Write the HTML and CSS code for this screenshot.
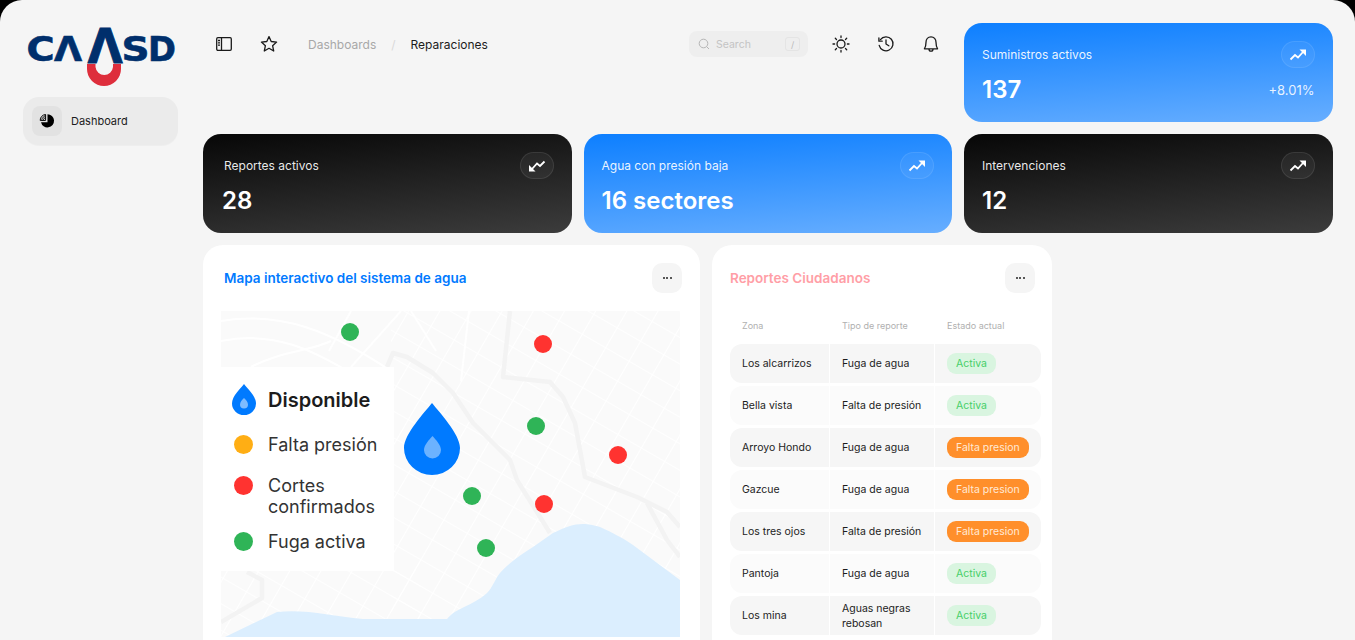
FILE: index.html
```html
<!DOCTYPE html>
<html lang="es">
<head>
    <meta charset="UTF-8">
    <meta name="viewport" content="width=device-width, initial-scale=1.0">
    <title>CAASD - Reparaciones</title>
    <link rel="stylesheet" href="styles.css">
</head>
<body>
    <div class="shell">
        <aside class="sidebar">
            <svg class="logo" viewBox="23 8 155 89" role="img" aria-label="CAASD">
                <g class="logo-letters">
                    <text transform="translate(26.5 61) scale(1.16 1)">C</text>
                    <text transform="translate(54 61) scale(1.1 1)">Λ</text>
                    <text transform="translate(87.5 62.5) scale(1.38 1.45)">Λ</text>
                    <text transform="translate(121.5 61) scale(1.18 1)">S</text>
                    <text transform="translate(148 61) scale(1.02 1)">D</text>
                </g>
                <path class="logo-drop" fill-rule="evenodd" d="M87 64H121V69A17 17 0 0 1 87 69ZM95.5 64V67A8.8 9 0 0 0 113 67V64Z"/>
            </svg>
            <a class="nav-item">
                <span class="nav-icon">
                    <svg width="16" height="16" viewBox="0 0 16 16">
                        <path d="M8.5 1.2A6.6 6.6 0 1 1 2 9.2H8.5Z" fill="#000"/>
                        <path d="M6.6 1.5V7.4H1.2A5.8 5.8 0 0 1 6.6 1.5ZM2.2 6.4 6 2.6M3.6 7.2 6.4 4.2" fill="none" stroke="#000" stroke-width="1"/>
                    </svg>
                </span>
                Dashboard
            </a>
        </aside>

        <main class="main">
            <header class="topbar">
                <div class="topbar-left">
                    <svg class="icon" width="18" height="18" viewBox="0 0 18 18" fill="none" stroke="#1a1a1a" stroke-width="1.3">
                        <rect x="1.7" y="2.7" width="14.6" height="12.6" rx="1.2"/>
                        <path d="M6.5 2.7V15.3M3 5.5H5M3 7.8H5M3 10.1H5"/>
                    </svg>
                    <svg class="icon star" width="18" height="18" viewBox="0 0 18 18" fill="none" stroke="#1a1a1a" stroke-width="1.3" stroke-linejoin="round">
                        <path d="M9 1.6 11.2 6.5 16.6 7.1 12.6 10.7 13.7 16 9 13.3 4.3 16 5.4 10.7 1.4 7.1 6.8 6.5Z"/>
                    </svg>
                    <nav class="crumbs">
                        <span class="crumb-muted">Dashboards</span>
                        <span class="crumb-sep">/</span>
                        <span class="crumb-now">Reparaciones</span>
                    </nav>
                </div>
                <div class="topbar-right">
                    <div class="search">
                        <svg width="12" height="12" viewBox="0 0 12 12" fill="none" stroke="#b5b5b5" stroke-width="1">
                            <circle cx="5.5" cy="5.5" r="4.3"/>
                            <path d="M8.7 8.7 11 11"/>
                        </svg>
                        <span class="search-text">Search</span>
                        <span class="search-key">/</span>
                    </div>
                    <svg class="icon" width="18" height="18" viewBox="0 0 18 18" fill="none" stroke="#1a1a1a" stroke-width="1.3" stroke-linecap="round">
                        <circle cx="9" cy="9" r="4"/>
                        <path d="M9 1V2.6M9 15.4V17M1 9H2.6M15.4 9H17M3.3 3.3 4.5 4.5M13.5 13.5 14.7 14.7M3.3 14.7 4.5 13.5M13.5 4.5 14.7 3.3"/>
                    </svg>
                    <svg class="icon" width="18" height="18" viewBox="0 0 18 18" fill="none" stroke="#1a1a1a" stroke-width="1.3" stroke-linecap="round" stroke-linejoin="round">
                        <path d="M3.4 4.6A7 7 0 1 1 2.2 10.4"/>
                        <path d="M1.9 2.9V6.2H5.2M9 5V9L11.8 10.8"/>
                    </svg>
                    <svg class="icon" width="18" height="18" viewBox="0 0 18 18" fill="none" stroke="#1a1a1a" stroke-width="1.3" stroke-linejoin="round">
                        <path d="M9 1.8C6 1.8 4 4.2 4 7.2C4 10.8 3.4 12.4 2.4 13.8H15.6C14.6 12.4 14 10.8 14 7.2C14 4.2 12 1.8 9 1.8Z"/>
                        <path d="M7 14C7 15.3 7.8 16.2 9 16.2S11 15.3 11 14"/>
                    </svg>
                </div>
            </header>

            <section class="kpi kpi-blue">
                <div class="kpi-row">
                    <span class="kpi-label">Suministros activos</span>
                    <span class="kpi-badge"><svg class="trend" viewBox="0 0 18 14"><path class="trend-line" d="M1.5 11.5 6 7 9 9.5 14 4"/><path class="trend-head" d="M10.5 1.5H17V8Z"/></svg></span>
                </div>
                <div class="kpi-row kpi-bottom">
                    <span class="kpi-value">137</span>
                    <span class="kpi-delta">+8.01%</span>
                </div>
            </section>

            <section class="kpi kpi-dark kpi-first">
                <div class="kpi-row">
                    <span class="kpi-label">Reportes activos</span>
                    <span class="kpi-badge"><svg class="trend trend-down" viewBox="0 0 18 14"><path class="trend-line" d="M1.5 11.5 6 7 9 9.5 14 4"/><path class="trend-head" d="M10.5 1.5H17V8Z"/></svg></span>
                </div>
                <div class="kpi-row kpi-bottom">
                    <span class="kpi-value">28</span>
                </div>
            </section>
            <section class="kpi kpi-blue">
                <div class="kpi-row">
                    <span class="kpi-label">Agua con presión baja</span>
                    <span class="kpi-badge"><svg class="trend" viewBox="0 0 18 14"><path class="trend-line" d="M1.5 11.5 6 7 9 9.5 14 4"/><path class="trend-head" d="M10.5 1.5H17V8Z"/></svg></span>
                </div>
                <div class="kpi-row kpi-bottom">
                    <span class="kpi-value">16 sectores</span>
                </div>
            </section>
            <section class="kpi kpi-dark">
                <div class="kpi-row">
                    <span class="kpi-label">Intervenciones</span>
                    <span class="kpi-badge"><svg class="trend" viewBox="0 0 18 14"><path class="trend-line" d="M1.5 11.5 6 7 9 9.5 14 4"/><path class="trend-head" d="M10.5 1.5H17V8Z"/></svg></span>
                </div>
                <div class="kpi-row kpi-bottom">
                    <span class="kpi-value">12</span>
                </div>
            </section>

            <div class="panels">
                <section class="panel panel-map">
                    <div class="panel-head">
                        <h2 class="panel-title title-blue">Mapa interactivo del sistema de agua</h2>
                        <button class="more"><span></span><span></span><span></span></button>
                    </div>
                    <div class="map">
                        <svg class="map-art" width="459" height="326" viewBox="0 0 459 326">
                            <defs>
                                <pattern id="streets" width="27" height="23" patternUnits="userSpaceOnUse" patternTransform="rotate(30)">
                                    <path d="M0 0H27" stroke="#fff" stroke-width="1.8"/>
                                    <path d="M0 0V23" stroke="#fff" stroke-width="2"/>
                                </pattern>
                            </defs>
                            <rect width="459" height="326" fill="#fafafa"/>
                            <rect x="170" width="289" height="326" fill="url(#streets)"/>
                            <rect y="250" width="200" height="76" fill="url(#streets)"/>
                            <g fill="none" stroke="#fff" stroke-width="2">
                                <path d="M0 30C50 20 90 35 150 75"/>
                                <path d="M0 10C60 0 110 20 170 60"/>
                                <path d="M30 56C60 40 90 40 110 30"/>
                                <path d="M180 0 130 56M130 0 108 40M190 0 215 40M248 0 240 70"/>
                            </g>
                            <g fill="none" stroke="#f3f3f3" stroke-width="4.5" stroke-linejoin="round">
                                <path d="M166 56 172 42 186 46 212 62 232 82 252 112 289 149 296 169 329 222"/>
                                <path d="M289 0 282 66 329 71 342 86 354 112 364 166 416 186 446 201 459 216"/>
                                <path d="M426 192 446 229 459 246"/>
                                <path d="M0 311 41 287V269L26 261"/>
                            </g>
                            <path d="M4 326 56 301C85 298 110 305 142 308H226C236 296 250 296 266 282 272 276 274 268 279 262 290 250 300 244 312 236L332 222C345 216 352 213 362 213 368 213 372 214 379 216 392 222 402 227 412 234L459 269V326Z" fill="#dbeefe"/>
                            <g>
                                <circle class="dot-green" cx="129" cy="21" r="9"/>
                                <circle class="dot-red" cx="322" cy="33" r="9"/>
                                <circle class="dot-green" cx="315" cy="115" r="9"/>
                                <circle class="dot-red" cx="397" cy="144" r="9"/>
                                <circle class="dot-green" cx="251" cy="185" r="9"/>
                                <circle class="dot-red" cx="323" cy="193" r="9"/>
                                <circle class="dot-green" cx="265" cy="237" r="9"/>
                            </g>
                            <path d="M211 92C218 101 239 123 239 137A28 27 0 0 1 183 137C183 123 204 101 211 92Z" fill="#007aff"/>
                            <path d="M211.5 125C215 129 220 134 220 139A8.5 8.5 0 0 1 203 139C203 134 208 129 211.5 125Z" fill="#6cb2ff"/>
                        </svg>
                        <div class="legend">
                            <div class="legend-item legend-main">
                                <svg width="24" height="31" viewBox="0 0 24 31">
                                    <path d="M12 0C15 4 24 12 24 19.5A12 11.5 0 0 1 0 19.5C0 12 9 4 12 0Z" fill="#007aff"/>
                                    <path d="M12 14C14 16 16 18 16 20.5A4 4 0 0 1 8 20.5C8 18 10 16 12 14Z" fill="#7fbcff"/>
                                </svg>
                                <span class="legend-strong">Disponible</span>
                            </div>
                            <div class="legend-item">
                                <span class="legend-dot dot-orange"></span>
                                <span>Falta presión</span>
                            </div>
                            <div class="legend-item">
                                <span class="legend-dot dot-redfill"></span>
                                <span>Cortes<br>confirmados</span>
                            </div>
                            <div class="legend-item legend-last">
                                <span class="legend-dot dot-greenfill"></span>
                                <span>Fuga activa</span>
                            </div>
                        </div>
                    </div>
                </section>

                <section class="panel panel-table">
                    <div class="panel-head">
                        <h2 class="panel-title title-pink">Reportes Ciudadanos</h2>
                        <button class="more"><span></span><span></span><span></span></button>
                    </div>
                    <table class="reports">
                        <thead>
                            <tr><th>Zona</th><th>Tipo de reporte</th><th>Estado actual</th></tr>
                        </thead>
                        <tbody>
                            <tr><td>Los alcarrizos</td><td>Fuga de agua</td><td><span class="tag tag-ok">Activa</span></td></tr>
                            <tr><td>Bella vista</td><td>Falta de presión</td><td><span class="tag tag-ok">Activa</span></td></tr>
                            <tr><td>Arroyo Hondo</td><td>Fuga de agua</td><td><span class="tag tag-warn">Falta presion</span></td></tr>
                            <tr><td>Gazcue</td><td>Fuga de agua</td><td><span class="tag tag-warn">Falta presion</span></td></tr>
                            <tr><td>Los tres ojos</td><td>Falta de presión</td><td><span class="tag tag-warn">Falta presion</span></td></tr>
                            <tr><td>Pantoja</td><td>Fuga de agua</td><td><span class="tag tag-ok">Activa</span></td></tr>
                            <tr><td>Los mina</td><td>Aguas negras rebosan</td><td><span class="tag tag-ok">Activa</span></td></tr>
                        </tbody>
                    </table>
                </section>
            </div>
        </main>
    </div>
</body>
</html>
```

FILE: styles.css
```css
* {
    box-sizing: border-box;
}
html, body {
    margin: 0;
    height: 640px;
    overflow: hidden;
    background-color: #000;
}
body {
    font-family: "Inter", "Liberation Sans", sans-serif;
    color: #1c1c1c;
}
.shell {
    display: flex;
    height: 640px;
    overflow: hidden;
    background-color: #f5f5f5;
    border-radius: 22px 22px 0 0;
}

/* sidebar */
.sidebar {
    width: 203px;
    flex-shrink: 0;
    padding: 8px 25px 0 23px;
}
.logo {
    display: block;
    width: 155px;
    height: 89px;
}
.logo-letters text {
    font-family: "DejaVu Sans", sans-serif;
    font-weight: 700;
    font-size: 33px;
    fill: #002f6c;
    stroke: #002f6c;
    stroke-width: 0.6;
}
.logo-drop {
    fill: #de2e3c;
}
.nav-item {
    display: flex;
    align-items: center;
    gap: 9px;
    height: 48px;
    padding: 0 9px;
    background-color: #ebebeb;
    border-radius: 16px;
    font-size: 11px;
    box-shadow: 0 1px 1px rgba(0, 0, 0, 0.03);
}
.nav-icon {
    display: flex;
    align-items: center;
    justify-content: center;
    width: 30px;
    height: 30px;
    background-color: #e2e2e2;
    border-radius: 8px;
}

/* main area */
.main {
    flex: 1;
    min-width: 0;
    display: grid;
    grid-template-columns: repeat(3, 1fr);
    grid-template-rows: 99px 99px 395px;
    gap: 12px;
    padding: 23px 22.5px 0 0;
    align-content: start;
}
.topbar {
    grid-column: span 2;
    display: flex;
    justify-content: space-between;
    padding: 8px 12px 0 12px;
    height: 34px;
}
.topbar-left,
.topbar-right {
    display: flex;
    align-items: center;
}
.icon {
    display: block;
    flex-shrink: 0;
}
.star {
    margin-left: 27px;
}
.crumbs {
    display: flex;
    align-items: center;
    margin-left: 30px;
    font-size: 12px;
}
.crumb-muted {
    color: #a8a8a8;
}
.crumb-sep {
    margin: 0 15px;
    color: #d9d9d9;
}
.search {
    display: flex;
    align-items: center;
    width: 119px;
    height: 26px;
    margin-right: 24px;
    padding: 0 8px 0 9px;
    background-color: #eeeeee;
    border-radius: 8px;
}
.search-text {
    margin-left: 6px;
    font-size: 10.5px;
    color: #c4c4c4;
}
.search-key {
    display: flex;
    align-items: center;
    justify-content: center;
    width: 15px;
    height: 14px;
    margin-left: auto;
    border: 1px solid #e4e4e4;
    border-radius: 3px;
    font-size: 9px;
    color: #bbb;
}
.topbar-right .icon + .icon {
    margin-left: 27px;
}

/* stat cards */
.kpi {
    padding: 18px 18px 0 18px;
    border-radius: 18px;
    color: #fff;
}
.kpi-dark {
    background: linear-gradient(174deg, #070707, #3c3c3c);
}
.kpi-blue {
    background: linear-gradient(176deg, #0d7fff, #67aeff);
}
.kpi-first {
    padding-left: 19px;
}
.kpi-first .kpi-label {
    margin-left: 2px;
}
.kpi-row {
    display: flex;
    align-items: center;
    justify-content: space-between;
}
.kpi-bottom {
    margin-top: 7px;
}
.kpi-label {
    font-size: 12px;
    color: rgba(255, 255, 255, 0.92);
}
.kpi-badge {
    display: flex;
    align-items: center;
    justify-content: center;
    width: 34px;
    height: 27px;
    border-radius: 14px;
    border: 1px solid rgba(255, 255, 255, 0.09);
    background-color: rgba(255, 255, 255, 0.05);
}
.trend {
    width: 18px;
    height: 14px;
}
.trend-down {
    transform: rotate(180deg);
}
.trend-line {
    fill: none;
    stroke: #fff;
    stroke-width: 1.8;
}
.trend-head {
    fill: #fff;
}
.kpi-value {
    font-size: 24px;
    line-height: 29px;
    font-weight: 600;
}
.kpi-delta {
    font-size: 13px;
    color: rgba(255, 255, 255, 0.88);
}

/* bottom panels */
.panels {
    grid-column: span 3;
    display: flex;
    align-items: flex-start;
    gap: 12px;
}
.panel {
    height: 395px;
    padding: 18px 18px 0 18px;
    background-color: #fff;
    border-radius: 20px 20px 0 0;
}
.panel-map {
    width: 497px;
}
.panel-table {
    width: 340px;
    padding-right: 11px;
}
.panel-head {
    display: flex;
    align-items: center;
    justify-content: space-between;
    height: 30px;
}
.panel-table .panel-head {
    padding-right: 6px;
}
.panel-title {
    margin: 0;
    font-size: 13.5px;
    font-weight: 600;
}
.panel-map .panel-title {
    margin-left: 3px;
}
.title-blue {
    color: #007aff;
}
.title-pink {
    color: #ff9ea6;
}
.more {
    display: flex;
    align-items: center;
    justify-content: center;
    gap: 1.5px;
    width: 30px;
    height: 30px;
    padding: 0;
    border: none;
    border-radius: 10px;
    background-color: #f5f5f5;
}
.more span {
    width: 2px;
    height: 2px;
    border-radius: 50%;
    background-color: #222;
}

/* map */
.map {
    position: relative;
    width: 459px;
    height: 326px;
    margin-top: 18px;
}
.map-art {
    display: block;
}
.dot-green {
    fill: #2fb457;
}
.dot-red {
    fill: #ff3330;
}
.legend {
    position: absolute;
    left: 0;
    top: 56px;
    width: 173px;
    height: 204px;
    display: flex;
    flex-direction: column;
    gap: 20px;
    padding: 17px 0 0 11px;
    background-color: #fff;
    font-size: 18px;
    line-height: 21px;
    color: #333;
}
.legend-item {
    display: flex;
    align-items: flex-start;
    gap: 12px;
}
.legend-main {
    align-items: center;
    margin-bottom: -1px;
}
.legend-strong {
    margin-top: 2px;
    font-size: 20px;
    font-weight: 600;
    color: #1c1c1c;
}
.legend-last {
    margin-top: -6px;
}
.legend-dot {
    flex-shrink: 0;
    width: 19px;
    height: 19px;
    margin: 1px 3px 0 2px;
    border-radius: 50%;
}
.dot-orange {
    background-color: #ffae14;
}
.dot-redfill {
    background-color: #ff3330;
}
.dot-greenfill {
    background-color: #2fb457;
}

/* reports table */
.reports {
    width: 311px;
    margin-top: 13px;
    border-collapse: separate;
    border-spacing: 0 3px;
    table-layout: fixed;
    font-size: 10.5px;
}
.reports th {
    height: 32px;
    padding: 0 0 0 12px;
    border-left: 1px solid transparent;
    font-size: 9px;
    font-weight: 400;
    text-align: left;
    color: #b0b0b0;
}
.reports th:first-child {
    border-left: none;
}
.reports th:nth-child(1) {
    width: 99px;
}
.reports th:nth-child(2) {
    width: 105px;
}
.reports td {
    height: 39px;
    padding: 0 8px 0 12px;
    line-height: 15px;
    background-color: #f6f6f6;
    border-left: 1px solid #fff;
}
.reports tbody tr:nth-child(even) td {
    background-color: #fbfbfb;
}
.reports td:first-child {
    border-left: none;
    border-radius: 12px 0 0 12px;
}
.reports td:last-child {
    border-radius: 0 12px 12px 0;
    white-space: nowrap;
}
.tag {
    display: inline-block;
    height: 21px;
    padding: 0 9px;
    line-height: 21px;
    border-radius: 9px;
}
.tag-ok {
    background-color: #d9f5e0;
    color: #47cf68;
}
.tag-warn {
    background-color: #ff8f2b;
    color: #ffe9d6;
}
```
